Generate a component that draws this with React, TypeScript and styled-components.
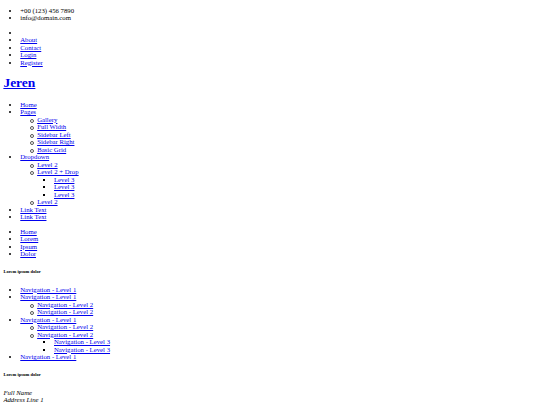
import React from 'react';
import styled, { createGlobalStyle, css } from 'styled-components';

// The reference is a 1280px-wide unstyled page shrunk to 540px wide,
// so every default browser metric is multiplied by 540 / 1280.
const S = 540 / 1280;
const px = (v: number) => `${(v * S).toFixed(3)}px`;

const GlobalStyle = createGlobalStyle`
  body {
    margin: 0 ${px(8)} ${px(8)};
    background: #ffffff;
    color: #000000;
    font-family: 'Liberation Serif', 'Times New Roman', serif;
    font-size: ${px(16)};
    line-height: ${px(17.8)};
  }
`;

const List = styled.ul<{ $level?: number }>`
  display: block;
  margin: ${({ $level = 1 }) => ($level > 1 ? 0 : px(16))} 0;
  padding-left: ${px(40)};
  list-style-type: ${({ $level = 1 }) =>
    $level === 1 ? 'disc' : $level === 2 ? 'none' : 'square'};

  ${({ $level = 1 }) =>
    $level === 2 &&
    css`
      & > li {
        position: relative;
      }

      /* hollow circle marker, drawn since a 3px native circle fills in */
      & > li::before {
        content: '';
        position: absolute;
        left: -7.2px;
        top: 3px;
        width: 2px;
        height: 2px;
        border: 0.5px solid #555;
        border-radius: 50%;
      }
    `}
`;

const Item = styled.li`
  display: list-item;
`;

const TextLink = styled.a`
  color: #0000ee;
  text-decoration: underline;
  cursor: pointer;
`;

const Title = styled.h1`
  font-size: ${px(32)};
  line-height: ${px(38)};
  font-weight: bold;
  margin: ${px(22)} 0;
`;

const SideHeading = styled.h6`
  font-size: ${px(10.72)};
  line-height: ${px(12.3)};
  font-weight: bold;
  margin: ${px(27)} 0;
`;

const Address = styled.address`
  display: block;
  font-style: italic;
`;

type NavNode = { label: string; children?: NavNode[] };

const mainNav: NavNode[] = [
  { label: 'Home' },
  {
    label: 'Pages',
    children: [
      { label: 'Gallery' },
      { label: 'Full Width' },
      { label: 'Sidebar Left' },
      { label: 'Sidebar Right' },
      { label: 'Basic Grid' },
    ],
  },
  {
    label: 'Dropdown',
    children: [
      { label: 'Level 2' },
      {
        label: 'Level 2 + Drop',
        children: [{ label: 'Level 3' }, { label: 'Level 3' }, { label: 'Level 3' }],
      },
      { label: 'Level 2' },
    ],
  },
  { label: 'Link Text' },
  { label: 'Link Text' },
];

const sideNav: NavNode[] = [
  { label: 'Navigation - Level 1' },
  {
    label: 'Navigation - Level 1',
    children: [{ label: 'Navigation - Level 2' }, { label: 'Navigation - Level 2' }],
  },
  {
    label: 'Navigation - Level 1',
    children: [
      { label: 'Navigation - Level 2' },
      {
        label: 'Navigation - Level 2',
        children: [{ label: 'Navigation - Level 3' }, { label: 'Navigation - Level 3' }],
      },
    ],
  },
  { label: 'Navigation - Level 1' },
];

const NavTree: React.FC<{ items: NavNode[]; level?: number }> = ({ items, level = 1 }) => (
  <List $level={level}>
    {items.map((item, i) => (
      <Item key={i}>
        <TextLink href="#">{item.label}</TextLink>
        {item.children && <NavTree items={item.children} level={level + 1} />}
      </Item>
    ))}
  </List>
);

export default function App() {
  return (
    <>
      <GlobalStyle />
      <List>
        <Item>+00 (123) 456 7890</Item>
        <Item>info@domain.com</Item>
      </List>

      <List>
        <Item></Item>
        <Item><TextLink href="#">About</TextLink></Item>
        <Item><TextLink href="#">Contact</TextLink></Item>
        <Item><TextLink href="#">Login</TextLink></Item>
        <Item><TextLink href="#">Register</TextLink></Item>
      </List>

      <Title>
        <TextLink href="#">Jeren</TextLink>
      </Title>

      <NavTree items={mainNav} />

      <List>
        <Item><TextLink href="#">Home</TextLink></Item>
        <Item><TextLink href="#">Lorem</TextLink></Item>
        <Item><TextLink href="#">Ipsum</TextLink></Item>
        <Item><TextLink href="#">Dolor</TextLink></Item>
      </List>

      <SideHeading>Lorem ipsum dolor</SideHeading>
      <NavTree items={sideNav} />

      <SideHeading>Lorem ipsum dolor</SideHeading>
      <Address>
        Full Name<br />
        Address Line 1<br />
        Address Line 2<br />
        Town/City<br />
        Postcode/Zip
      </Address>
    </>
  );
}
